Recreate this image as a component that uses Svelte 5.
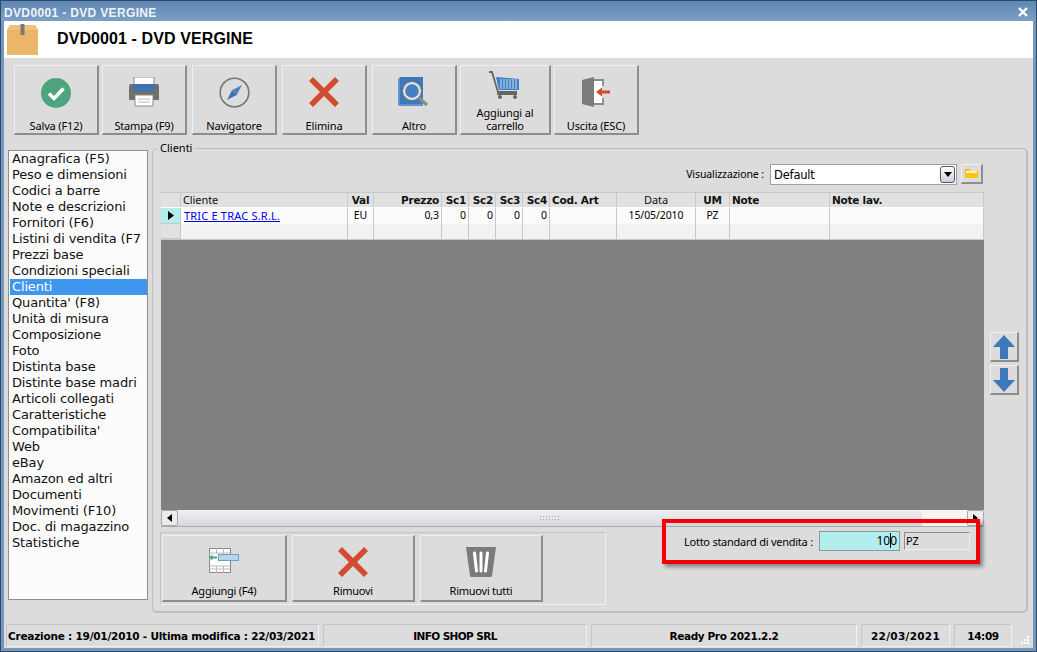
<script>
  const menu = ["Anagrafica (F5)","Peso e dimensioni","Codici a barre","Note e descrizioni","Fornitori (F6)","Listini di vendita (F7","Prezzi base","Condizioni speciali","Clienti","Quantita' (F8)","Unità di misura","Composizione","Foto","Distinta base","Distinte base madri","Articoli collegati","Caratteristiche","Compatibilita'","Web","eBay","Amazon ed altri","Documenti","Movimenti (F10)","Doc. di magazzino","Statistiche"];
  const cols = [
    { t: "Cliente", c: "l", b: false, v: "" },
    { t: "Val", c: "c", b: true, v: "EU" },
    { t: "Prezzo", c: "r", b: true, v: "0,3" },
    { t: "Sc1", c: "r", b: true, v: "0" },
    { t: "Sc2", c: "r", b: true, v: "0" },
    { t: "Sc3", c: "r", b: true, v: "0" },
    { t: "Sc4", c: "r", b: true, v: "0" },
    { t: "Cod. Art", c: "l", b: true, v: "" },
    { t: "Data", c: "c", b: false, v: "15/05/2010" },
    { t: "UM", c: "c", b: true, v: "PZ" },
    { t: "Note", c: "l", b: true, v: "" },
    { t: "Note lav.", c: "l", b: true, v: "" }
  ];
</script>

{#snippet xIcon(size)}
  <svg width={size} height={size} viewBox="0 0 30 30"><path d="M4 0 15 11 26 0 30 4 19 15 30 26 26 30 15 19 4 30 0 26 11 15 0 4Z" fill="#d24c30"/></svg>
{/snippet}

<div class="window">
  <div class="titlebar">
    <span class="ttl">DVD0001 - DVD VERGINE</span>
    <span class="close"><svg width="10" height="10" viewBox="0 0 10 10"><path d="M1 1 9 9M9 1 1 9" stroke="#fff" stroke-width="2.4"/></svg></span>
  </div>
  <div class="header">
    <svg class="box" width="31" height="31" viewBox="0 0 31 31">
      <path d="M0 6 3 1H28L31 6V31H0Z" fill="#ebb667"/>
      <path d="M0 6 3 1H28L31 6Z" fill="#eec17c"/>
      <rect x="13.500" y="0" width="4" height="11" fill="#7a7a7a"/>
    </svg>
    <h1>DVD0001 - DVD VERGINE</h1>
  </div>

  <div class="body">
    <div class="toolbar">
      <button class="tb">
        <svg width="32" height="32" viewBox="0 0 32 32"><circle cx="16" cy="16" r="15" fill="#4ea47c"/><path d="M9 16.5 14 21.5 23.5 11.5" fill="none" stroke="#fff" stroke-width="3.4"/></svg>
        <span>Salva (F12)</span>
      </button>
      <button class="tb">
        <svg width="32" height="30" viewBox="0 0 32 30"><path d="M6 0H26V8H6Z" fill="#fff" stroke="#8b8b8b"/><path d="M3 7H29Q31 7 31 10V23H25V19H7V23H1V10Q1 7 3 7Z" fill="#6f6f6f"/><rect x="5" y="7" width="22" height="7" fill="#3e73b2"/><path d="M7 18H25V29H7Z" fill="#fff" stroke="#8b8b8b"/><path d="M10 22H22M10 25H22" stroke="#bbb"/></svg>
        <span>Stampa (F9)</span>
      </button>
      <button class="tb wide">
        <svg width="31" height="31" viewBox="0 0 31 31"><circle cx="15.5" cy="15.5" r="14.3" fill="none" stroke="#777" stroke-width="1.6"/><path d="M23 8 17.7 18 13 13.2Z" fill="#4b82c4"/><path d="M8 23 13 13.2 17.7 18Z" fill="#3c70b2"/></svg>
        <span>Navigatore</span>
      </button>
      <button class="tb wide">{@render xIcon(30)}<span>Elimina</span></button>
      <button class="tb wide">
        <svg width="32" height="30" viewBox="0 0 32 30"><path d="M2 0H25V27H2Z" fill="#3d78ba"/><path d="M0 2 2 0V27H25V29H2L0 28Z" fill="#5f93cd"/><circle cx="14" cy="14" r="8" fill="#4580c0" stroke="#e2e2e2" stroke-width="2.4"/><circle cx="14" cy="14" r="9.6" fill="none" stroke="#777" stroke-width="1"/><path d="M21 21 29 28" stroke="#8b8b8b" stroke-width="3.2"/></svg>
        <span>Altro</span>
      </button>
      <button class="tb cart">
        <svg width="32" height="30" viewBox="0 0 32 30"><path d="M0 1H3L9 21H28" fill="none" stroke="#666" stroke-width="1.8"/><path d="M7 6 30 8V19H10Z" fill="#3f80c6"/><path d="M12 8V18M15 8V18M18 8V18M21 8V18M24 8V18M27 8V18" stroke="#cfe0f2" stroke-width="1"/><circle cx="11" cy="26" r="2" fill="#666"/><circle cx="26" cy="26" r="2" fill="#666"/><path d="M8 23H28" stroke="#666" stroke-width="2"/></svg>
        <span class="two">Aggiungi al<br />carrello</span>
      </button>
      <button class="tb">
        <svg width="28" height="30" viewBox="0 0 28 30"><path d="M0 3 12 0V30L0 27Z" fill="#7b7b7b"/><path d="M12 3H20V27H12Z" fill="#fff"/><path d="M12 3H21V9M21 21V27H12" fill="none" stroke="#8a8a8a" stroke-width="1.8"/><path d="M14 15 20 10.5V13.5H28V16.5H20V19.5Z" fill="#d24c30"/></svg>
        <span>Uscita (ESC)</span>
      </button>
    </div>

    <div class="main">
      <ul class="menu">
        {#each menu as m}
          <li class:sel={m === "Clienti"}>{m}</li>
        {/each}
      </ul>

      <fieldset class="group">
        <legend>Clienti</legend>
        <div class="vis">
          <label for="vis">Visualizzazione :</label>
          <div class="combo" id="vis">
            <span class="dflt">Default</span>
            <span class="drop"><svg width="8" height="5" viewBox="0 0 8 5"><path d="M0 0H8L4 5Z" fill="#000"/></svg></span>
          </div>
          <button class="folder" aria-label="Apri">
            <svg width="15" height="11" viewBox="0 0 15 11"><path d="M1 1H6L7 2.500H14V10H1Z" fill="#f7b500"/><path d="M2 2.500H13V5H2Z" fill="#fff3c4"/><path d="M1 5H14V10H1Z" fill="#ffc20e"/></svg>
          </button>
        </div>

        <div class="gridrow">
          <div class="grid">
            <div class="tr head">
              <div class="cell rowh"></div>
              {#each cols as c}
                <div class="cell {c.c}" class:b={c.b}>{c.t}</div>
              {/each}
            </div>
            <div class="tr r1">
              <div class="cell rowh cur"><svg width="6" height="9" viewBox="0 0 6 9"><path d="M0 0 6 4.500 0 9Z" fill="#000"/></svg></div>
              {#each cols as c, i}
                <div class="cell {c.c}">{#if i === 0}<a href="#top" class="link">TRIC E TRAC S.R.L.</a>{:else}{c.v}{/if}</div>
              {/each}
            </div>
            <div class="tr r2">
              <div class="cell rowh"></div>
              {#each cols as c}
                <div class="cell"></div>
              {/each}
            </div>
            <div class="empty"></div>
            <div class="hscroll">
              <span class="sbtn"><svg width="5" height="8" viewBox="0 0 5 8"><path d="M5 0V8L0 4Z" fill="#000"/></svg></span>
              <span class="thumb"><span class="grip"></span></span>
              <span class="track"></span>
              <span class="sbtn"><svg width="5" height="8" viewBox="0 0 5 8"><path d="M0 0V8L5 4Z" fill="#000"/></svg></span>
            </div>
          </div>
          <div class="arrows">
            <button class="arrow" aria-label="Su"><svg width="22" height="24" viewBox="0 0 22 24"><path d="M11 0 22 12H15V24H7V12H0Z" fill="#3d78ba"/></svg></button>
            <button class="arrow" aria-label="Giù"><svg width="22" height="24" viewBox="0 0 22 24"><path d="M7 0H15V12H22L11 24 0 12H7Z" fill="#3d78ba"/></svg></button>
          </div>
        </div>

        <div class="bottom">
          <div class="actions">
            <button class="ab">
              <svg width="30" height="25" viewBox="0 0 30 25"><rect x=".5" y=".5" width="21" height="24" fill="#fff" stroke="#888"/><path d="M.5 5H21M.5 18H21M7.500 0V6M14.500 0V6M7.500 18V25M14.500 18V25M.5 21H21" stroke="#bbb"/><rect x="9.500" y="6.500" width="20" height="6" fill="#bcd4ea" stroke="#62a5cc"/><path d="M0 9.500 3.500 6.500V8.500H8V10.500H3.500V12.500Z" fill="#4ea47c"/></svg>
              <span>Aggiungi (F4)</span>
            </button>
            <button class="ab">{@render xIcon(30)}<span>Rimuovi</span></button>
            <button class="ab">
              <svg width="30" height="30" viewBox="0 0 30 30"><path d="M0 0H30L26 29Q26 30 24 30H6Q4 30 4 29Z" fill="#7b7b7b"/><path d="M8.500 6 10.500 24M15 6V24M21.500 6 19.500 24" stroke="#fff" stroke-width="3" stroke-linecap="round"/></svg>
              <span>Rimuovi tutti</span>
            </button>
          </div>
          <div class="lotto">
            <span class="ltxt">Lotto standard di vendita :</span>
            <span class="qty">10<span class="caret"></span>0</span>
            <span class="um">PZ</span>
          </div>
          <div class="redbox"></div>
        </div>
      </fieldset>
    </div>

    <div class="status">
      <div class="st first">Creazione : 19/01/2010 - Ultima modifica : 22/03/2021</div>
      <div class="st shop">INFO SHOP SRL</div>
      <div class="st ver">Ready Pro 2021.2.2</div>
      <div class="st date">22/03/2021</div>
      <div class="st time">14:09</div>
      <svg class="sgrip" width="10" height="10" viewBox="0 0 10 10"><path d="M7 1h2v2H7zM4 4h2v2H4zM7 4h2v2H7zM1 7h2v2H1zM4 7h2v2H4zM7 7h2v2H7z" fill="#fff"/></svg>
    </div>
  </div>
</div>

<style>
  :global(body) { margin: 0; background: #34506f; }
  * { box-sizing: border-box; }
  .window {
    width: 1037px; height: 652px; overflow: hidden;
    display: flex; flex-direction: column;
    font: 11px "Noto Sans", "Liberation Sans", sans-serif;
    color: #000;
    background: #7397bd;
    border: 1px solid #2f4a68;
    padding: 0 3px 3px 3px;
  }
  .titlebar {
    height: 20px; flex: none;
    display: flex; align-items: center; justify-content: space-between;
    margin: 0 -3px; padding: 1px 7px 0 3px;
    background: linear-gradient(#5e87b2, #7d9fc4);
    color: #eef3f9; font: bold 12px "Liberation Sans", sans-serif; letter-spacing: .35px;
  }
  .ttl { padding-top: 3px; }
  .close { width: 12px; height: 12px; display: flex; align-items: center; justify-content: center; }
  .header {
    height: 37px; flex: none; background: #fff;
    display: flex; align-items: center; padding-left: 3px; gap: 19px;
  }
  h1 { margin: 0 0 1px 0; font: bold 16px "Liberation Sans", sans-serif; letter-spacing: .1px; }
  .body { flex: 1; min-height: 0; background: #dcdcdc; display: flex; flex-direction: column; padding: 7px 0 0 0; }
  button { font: inherit; color: inherit; padding: 0; }
  .toolbar { display: flex; gap: 3px; padding-left: 10px; height: 70px; flex: none; }
  .tb, .ab, .arrow, .folder {
    background: #dcdcdc;
    border: 1px solid;
    border-color: #f0f0f0 #8e8e8e #8e8e8e #f0f0f0;
    border-width: 1px 2px 2px 1px;
    display: flex; flex-direction: column; align-items: center;
  }
  .tb { width: 85px; height: 70px; padding-top: 11px; position: relative; }
  .tb span { position: absolute; left: 0; right: 0; bottom: 0; text-align: center; line-height: 13px; height: 14px; letter-spacing: -.15px; }
  .tb span.two { height: 27px; }
  .wide { margin-left: 2px; }
  .cart { width: 91px; padding-top: 5px; }
  .main { flex: 1; min-height: 0; display: flex; padding: 7px 0 0 4px; gap: 4px; }
  .menu {
    list-style: none; margin: 8px 0 0; padding: 0 0 0 1px;
    width: 140px; height: 450px; background: #fcfcfc;
    border: 1px solid #8f8f8f; overflow: hidden;
    font: 13px/16px "DejaVu Sans", Verdana, sans-serif; letter-spacing: -.15px; white-space: nowrap;
  }
  .menu li { padding-left: 2px; height: 16px; color: #111; }
  .menu .sel { background: #3f96ef; color: #fff; }
  .group {
    position: relative; margin: 0; padding: 9px 0 0 8px; width: 876px; height: 471px; min-width: 0;
    border: 2px solid #bebebe; border-width: 1px 2px 2px 1px; border-radius: 5px;
  }
  legend { padding: 0 3px; margin-left: -4px; line-height: 12px; font-size: 11px; height: 12px; }
  .vis { display: flex; align-items: center; justify-content: flex-end; height: 22px; margin-right: 43px; }
  .vis label { margin-right: 6px; font-size: 10.5px; letter-spacing: -.1px; }
  .combo {
    width: 187px; height: 21px; background: #fff; border: 1px solid #a0a0a0;
    display: flex; align-items: center; justify-content: space-between;
    padding-left: 3px; font: 11.5px "DejaVu Sans", sans-serif; letter-spacing: -.2px;
  }
  .dflt { padding-top: 1px; }
  .drop { width: 15px; height: 17px; border: 1px solid #555; border-radius: 3px; background: linear-gradient(#fff, #ccd); display: flex; align-items: center; justify-content: center; margin-right: 1px; }
  .folder { width: 22px; height: 20px; margin-left: 4px; justify-content: center; }
  .gridrow { display: flex; margin-top: 7px; height: 335px; }
  .grid { width: 823px; display: flex; flex-direction: column; }
  .tr { display: grid; grid-template-columns: 20px 167px 26px 68px 27px 27px 27px 27px 67px 79px 34px 100px 154px; }
  .head { height: 16px; background: #e1e1e1; border-top: 1px solid #c8c8c8; }
  .head .cell { border-bottom: 1px solid #fff; font-size: 11px; color: #111; line-height: 13px; }
  .r1 { height: 16px; background: #fcfcfc; }
  .r2 { height: 16px; background: #f2f2f2; border-bottom: 1px solid #c8c8c8; }
  .cell { border-right: 1px solid #c8c8c8; padding: 0 2px; white-space: nowrap; overflow: hidden; line-height: 15px; font-size: 10.5px; letter-spacing: -.1px; }
  .head .cell.b { font-family: "DejaVu Sans", sans-serif; font-weight: bold; font-size: 10.5px; letter-spacing: -.25px; line-height: 14px; }
  .rowh { background: #e1e1e1; border-bottom: 1px solid #c8c8c8; padding: 0; display: flex; align-items: center; justify-content: center; }
  .cur { background: #b2eeee; }
  .l { text-align: left; } .c { text-align: center; } .r { text-align: right; }
  .link { color: #0000ee; text-decoration: underline; font-size: 11px; letter-spacing: .2px; margin-left: 1px; }
  .empty { height: 270px; background: #808080; }
  .hscroll { height: 17px; display: flex; background: #e3e3e3; border-bottom: 1px solid #aaa; }
  .sbtn { width: 17px; background: #ececec; border: 1px solid #a8a8a8; border-radius: 2px; display: flex; align-items: center; justify-content: center; }
  .thumb { width: 744px; background: linear-gradient(#f0f0f4, #d6d6dc); display: flex; align-items: center; justify-content: center; }
  .grip { width: 22px; height: 6px; background: radial-gradient(circle, #aaa 35%, transparent 40%) 0 0 / 3px 3px; }
  .track { width: 45px; background: #f6f5ef; }
  .arrows { display: flex; flex-direction: column; gap: 3px; margin: 140px 0 0 6px; }
  .arrow { width: 29px; height: 30px; justify-content: center; }
  .bottom { position: relative; display: flex; margin-top: 5px; height: 73px; }
  .actions { width: 446px; margin-left: -1px; padding: 2px 1px; display: flex; gap: 5px; border: 1px solid #c4c4c4; border-right-color: #f0f0f0; border-bottom-color: #f0f0f0; }
  .ab { position: relative; width: 123px; height: 67px; padding-top: 11px; }
  .ab:first-child { width: 125px; padding-top: 12px; }
  .ab span { position: absolute; left: 0; right: 0; bottom: 2px; text-align: center; line-height: 14px; letter-spacing: -.25px; }
  .lotto { display: flex; align-items: center; position: absolute; left: 523px; top: -1px; height: 20px; }
  .ltxt { margin-right: 6px; width: 129px; letter-spacing: -.25px; white-space: nowrap; }
  .qty { width: 81px; height: 20px; background: #b2eeee; border: 1px solid #8a9a9a; text-align: right; padding-right: 2px; line-height: 18px; margin-right: 4px; position: relative; font-size: 12px; }
  .caret { display: inline-block; width: 1px; height: 15px; background: #000; vertical-align: -3px; margin-right: -1px; }
  .um { width: 66px; height: 18px; border: 1px solid; border-color: #8e8e8e #f0f0f0 #f0f0f0 #8e8e8e; line-height: 16px; padding-left: 1px; font-size: 11px; }
  .redbox { position: absolute; left: 501px; top: -13px; width: 318px; height: 45px; border: 4px solid #f40000; box-shadow: 3px 3px 4px rgba(0,0,0,.4); pointer-events: none; }
  .status { flex: none; height: 23px; margin: 14px 0 1px 2px; display: flex; gap: 4px; align-items: stretch; font: bold 10.5px "DejaVu Sans", sans-serif; letter-spacing: -.6px; position: relative; }
  .st { border: 1px solid; border-color: #c6c6c6 #f0f0f0 #f0f0f0 #c6c6c6; display: flex; align-items: center; justify-content: center; white-space: nowrap; padding-top: 1px; }
  .first { width: 313px; justify-content: flex-start; padding-left: 1px; letter-spacing: -.22px; }
  .shop { width: 264px; }
  .ver { width: 266px; letter-spacing: -.38px; }
  .date { width: 89px; letter-spacing: .3px; }
  .time { width: 58px; letter-spacing: -.4px; }
  .sgrip { position: absolute; right: 3px; bottom: 2px; }
</style>
